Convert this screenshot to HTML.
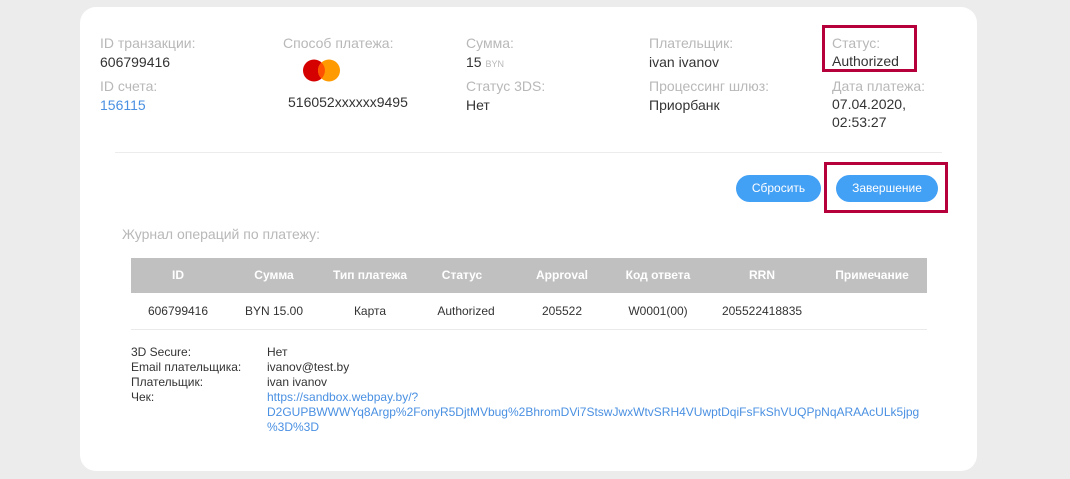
<!DOCTYPE html>
<html><head><meta charset="utf-8"><style>
*{margin:0;padding:0;box-sizing:border-box}
body{width:1070px;height:479px;background:#ececec;font-family:"Liberation Sans",Arial,sans-serif;position:relative;overflow:hidden}
.card{position:absolute;left:80px;top:7px;width:897px;height:464px;background:#fff;border-radius:16px}
.a{position:absolute;white-space:nowrap}
.l{font-size:14px;color:#b8b8b8}
.v{font-size:14px;color:#333}
.lnk{color:#4a90e2}
.sep{position:absolute;left:115px;top:152px;width:827px;height:1px;background:#ececec}
.btn{position:absolute;top:175px;height:27px;border-radius:14px;background:#42a0f5;color:#fff;font-size:12px;text-align:center;line-height:27px}
.red{position:absolute;border:3px solid #b5003c}
.th{position:absolute;left:131px;top:258px;width:796px;height:35px;background:#c0c0c0}
.t{position:absolute;transform:translateX(-50%);white-space:nowrap;font-size:12px}
.h{color:#fff;font-weight:bold;top:268px}
.r{color:#333;top:304px}
.rl{position:absolute;left:131px;top:329px;width:796px;height:1px;background:#eaeaea}
.d{position:absolute;font-size:12px;color:#333;line-height:15px;white-space:nowrap}
</style></head><body>
<div class="card"></div>
<div class="a l" style="left:100px;top:35px">ID транзакции:</div>
<div class="a v" style="left:100px;top:54px">606799416</div>
<div class="a l" style="left:100px;top:78px">ID счета:</div>
<div class="a v lnk" style="left:100px;top:97px">156115</div>

<div class="a l" style="left:283px;top:35px">Способ платежа:</div>
<svg class="a" style="left:303px;top:59px" width="40" height="24"><circle cx="11" cy="11.5" r="11" fill="#d50000"/><circle cx="26" cy="11.5" r="11" fill="#ff9a00"/><path d="M18.5 3.5a11 11 0 0 1 0 16a11 11 0 0 1 0-16z" fill="#ff5000"/></svg>
<div class="a v" style="left:288px;top:94px">516052xxxxxx9495</div>

<div class="a l" style="left:466px;top:35px">Сумма:</div>
<div class="a v" style="left:466px;top:54px">15 <span style="font-size:9px;color:#b8b8b8">BYN</span></div>
<div class="a l" style="left:466px;top:78px">Статус 3DS:</div>
<div class="a v" style="left:466px;top:97px">Нет</div>

<div class="a l" style="left:649px;top:35px">Плательщик:</div>
<div class="a v" style="left:649px;top:54px">ivan ivanov</div>
<div class="a l" style="left:649px;top:78px">Процессинг шлюз:</div>
<div class="a v" style="left:649px;top:97px">Приорбанк</div>

<div class="a l" style="left:832px;top:35px">Статус:</div>
<div class="a v" style="left:832px;top:53px">Authorized</div>
<div class="a l" style="left:832px;top:78px">Дата платежа:</div>
<div class="a v" style="left:832px;top:95px;line-height:18px">07.04.2020,<br>02:53:27</div>
<div class="red" style="left:822px;top:25px;width:95px;height:47px;border-width:3px 3px 3px 3px"></div>

<div class="sep"></div>
<div class="btn" style="left:736px;width:85px">Сбросить</div>
<div class="btn" style="left:836px;width:102px">Завершение</div>
<div class="red" style="left:824px;top:162px;width:124px;height:51px"></div>

<div class="a l" style="left:122px;top:226px">Журнал операций по платежу:</div>

<div class="th"></div>
<div class="t h" style="left:178px">ID</div>
<div class="t h" style="left:274px">Сумма</div>
<div class="t h" style="left:370px">Тип платежа</div>
<div class="t h" style="left:462px">Статус</div>
<div class="t h" style="left:562px">Approval</div>
<div class="t h" style="left:658px">Код ответа</div>
<div class="t h" style="left:762px">RRN</div>
<div class="t h" style="left:872px">Примечание</div>
<div class="t r" style="left:178px">606799416</div>
<div class="t r" style="left:274px">BYN 15.00</div>
<div class="t r" style="left:370px">Карта</div>
<div class="t r" style="left:466px">Authorized</div>
<div class="t r" style="left:562px">205522</div>
<div class="t r" style="left:658px">W0001(00)</div>
<div class="t r" style="left:762px">205522418835</div>
<div class="rl"></div>

<div class="d" style="left:131px;top:345px">3D Secure:<br>Email плательщика:<br>Плательщик:<br>Чек:</div>
<div class="d" style="left:267px;top:345px">Нет<br>ivanov@test.by<br>ivan ivanov<br><span class="lnk">https://sandbox.webpay.by/?<br>D2GUPBWWWYq8Argp%2FonyR5DjtMVbug%2BhromDVi7StswJwxWtvSRH4VUwptDqiFsFkShVUQPpNqARAAcULk5jpg<br>%3D%3D</span></div>
</body></html>
